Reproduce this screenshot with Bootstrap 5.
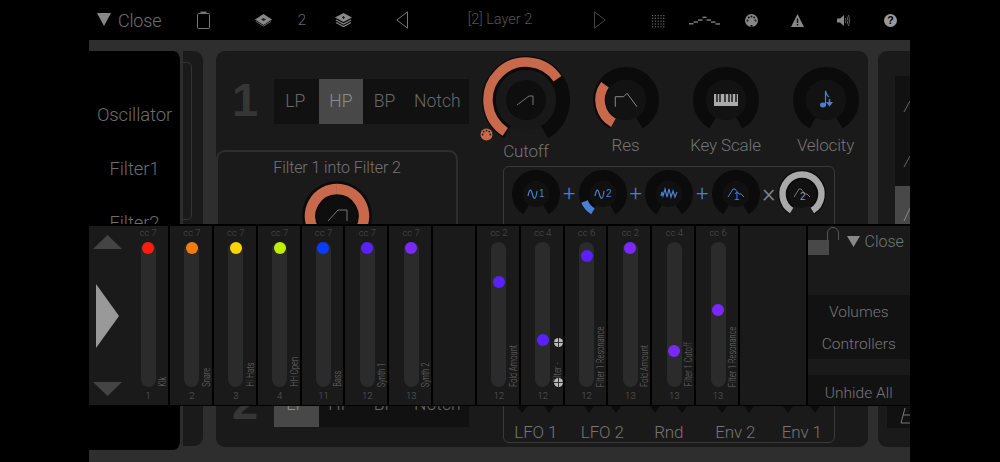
<!doctype html>
<html lang="en">
<head>
    <meta charset="utf-8">
    <meta name="viewport" content="width=device-width, initial-scale=1">
    <title>Layer 2</title>
    <link href="https://cdn.jsdelivr.net/npm/bootstrap@5.3.0/dist/css/bootstrap.min.css" rel="stylesheet">
    <style>
        html, body { height: 462px; overflow: hidden; }
        body { background: #000; color: #707070; font-family: Roboto, "Liberation Sans", sans-serif; font-weight: 300; }
        svg { display: block; overflow: visible; }

        .topbar { height: 40px; display: grid; align-items: center; justify-items: center; padding-left: 97px;
            grid-template-columns: 64px 85px 35px 42px 41px 76px 120px 80px 34px 61px 32px 61px 31px 62px; }
        .tb-close { font-size: 18px; letter-spacing: -.2px; justify-self: start; gap: 7px; }
        .tb-num { font-size: 15px; color: #666; }
        .tb-title { font-size: 14.5px; color: #555; white-space: nowrap; }

        .stage { width: 821px; height: 422px; margin-left: 89px; padding-top: 11px; background: #2e2e2e; overflow: hidden; }
        .side-menu { flex: 0 0 94px; height: 399px; background: #000; border-right: 3px solid #2e2e2e; border-top-right-radius: 9px; border-bottom-right-radius: 9px; padding-top: 37px; }
        .side-menu div { height: 54px; line-height: 54px; text-align: center; font-size: 18.5px; letter-spacing: -.1px; color: #6e6e6e; }
        .gutter { flex: 0 0 20px; height: 395px; background: #1a1a1a; border-top-right-radius: 9px; border-bottom-right-radius: 9px; padding-top: 11px; }
        .gutter-box { width: 9px; height: 158px; border: 1px solid #333; border-left: 0; border-radius: 0 5px 5px 0; }
        .main-panel { flex: 0 0 652px; min-width: 0; height: 396px; margin-left: 13px; background: #1a1a1a; border-radius: 9px; }
        .left-col { flex: 0 0 260px; padding-top: 28px; }
        .right-col { flex: 0 0 392px; min-width: 0; }

        .filter-head { height: 45px; }
        .filter-num { flex: 0 0 58px; text-align: center; font-family: "Liberation Sans", sans-serif; font-weight: 700; font-size: 47px; line-height: 41px; color: #363636; }
        .seg-row { width: 195px; height: 45px; background: #111; font-size: 17.5px; color: #6a6a6a; }
        .seg-cell { flex: 0 0 44.6px; line-height: 45px; text-align: center; margin-left: -1px; margin-right: 1px; }
        .seg-cell.wide { flex: 0 0 61px; }
        .seg-cell.on { background: #484848; color: #8d8d8d; margin-left: 0; margin-right: 0; }

        .into-box { width: 242px; height: 225px; margin-top: 26px; margin-bottom: 7px; border: 2px solid #2e2e2e; border-radius: 9px; padding-top: 5px; }
        .into-title { font-size: 16px; letter-spacing: -.1px; line-height: 22px; color: #757575; }
        .into-knob { margin-top: 2px; }

        .knob-row { padding-top: 5px; height: 115px; }
        .knob-cell { flex: 0 0 100px; }
        .knob-cell.rest { padding-top: 11px; }
        .knob-label { font-size: 17px; letter-spacing: -.15px; line-height: 24px; color: #757575; white-space: nowrap; }
        .knob-cell.first .knob-label { margin-top: -5px; }
        .knob-cell.rest .knob-label { margin-left: -1px; }
        .midi-badge { left: 4px; top: 72px; }

        .mod-box { width: 332px; height: 277px; margin-left: 27px; border: 1px solid #3a3a3a; border-radius: 6px; }
        .mod-knobs { padding: 3px 0 0 8px; }
        .mod-op { flex: 0 0 18.5px; text-align: center; font-size: 22px; line-height: 48px; color: #4a80d0; }
        .mod-op.times { font-size: 25px; color: #8a8a8a; }
        .mod-inputs { margin: 0 0 -2px -1.5px; }
        .mod-input { flex: 0 0 66.5px; text-align: center; font-size: 17px; letter-spacing: -.15px; line-height: 24px; color: #757575; }
        .notch-pair { height: 8px; gap: 17px; margin-bottom: 6px; }
        .notch { width: 0; height: 0; border-left: 5px solid transparent; border-right: 5px solid transparent; border-top: 7px solid #0c0c0c; }

        .right-panel { flex: 0 0 32px; height: 396px; margin-left: 10px; background: #1a1a1a; border-radius: 9px 0 0 9px; padding: 25px 0 0 17px; }
        .right-strip { height: 110px; background: #111; }
        .right-on { height: 45px; background: #484848; }
        .right-low { position: absolute; left: 9px; right: 0; bottom: 19px; height: 23px; background: #111; }

        .mixer { left: 89px; top: 224px; width: 821px; height: 182px; padding: 2px 0 1px; background: #000; gap: 2px; }
        .mix-arrows { flex: 0 0 37.2px; padding: 9px 0 9px 4px; background: #1a1a1a; }
        .arrow-big { margin-left: 3px; }
        .strip { flex: 0 0 41.85px; height: 179px; padding-left: 2px; background: #1a1a1a; }
        .strip.empty.big { flex: 0 0 65.5px; }
        .strip-row { gap: 2px; }
        .cc-label { height: 16px; line-height: 13px; font-size: 9.5px; color: #505050; }
        .track { width: 15px; height: 145px; background: #2b2b2b; border-radius: 8px; }
        .dot { left: 1.5px; width: 12px; height: 12px; border-radius: 50%; }
        .num-label { line-height: 18px; font-size: 9.5px; color: #5a5a5a; }
        .v-label { right: 0; bottom: 18px; writing-mode: vertical-rl; transform: translateY(50%) scaleY(.68) translateY(-50%) rotate(180deg); font-size: 11px; line-height: 10px; color: #6a6a6a; white-space: nowrap; }
        .fx-ball { right: 0; width: 9px; height: 9px; }

        .mix-side { flex: 0 0 102.5px; height: 179px; background: #1a1a1a; font-size: 15.5px; color: #767676; }
        .mix-head { height: 69px; }
        .mix-close { gap: 5px; margin-left: 8px; margin-top: 8px; height: 15px; line-height: 15px; font-size: 16px; }
        .mix-list { height: 64px; background: #121212; }
        .mix-list div { height: 32px; line-height: 35px; }
        .mix-gap { height: 16px; }
        .mix-unhide { height: 30px; line-height: 36px; background: #121212; }
    </style>
</head>

<body>

<header class="topbar">
    <div class="tb-close d-flex align-items-center">
        <svg width="14" height="14" viewBox="0 0 14 14"><path d="M0 0H14L7 13Z" fill="#888"/></svg>
        <span>Close</span>
    </div>
    <svg width="13" height="18" viewBox="0 0 13 18"><rect x=".5" y="2.5" width="12" height="15" rx="1" fill="none" stroke="#777"/><rect x="3.5" y=".5" width="6" height="2.5" fill="#777"/></svg>
    <svg width="17" height="12" viewBox="0 0 17 12"><path d="M8.5 0L17 5.5 8.5 11 0 5.5Z" fill="#888"/><path d="M8.5 4L11 5.5 8.5 7 6 5.5Z" fill="#222"/><path d="M1 7.5L8.5 12 16 7.5" fill="none" stroke="#666"/></svg>
    <span class="tb-num">2</span>
    <svg width="17" height="14" viewBox="0 0 17 14"><path d="M8.5 0L17 4.5 8.5 9 0 4.5Z" fill="#888"/><path d="M1 7L8.5 11 16 7M1 9.5L8.5 13.5 16 9.5" fill="none" stroke="#888" stroke-width="1.2"/><path d="M7 4.5H10M8.5 3V6" stroke="#222"/></svg>
    <svg width="12" height="18" viewBox="0 0 12 18"><path d="M11.5 .8V17.2L.8 9Z" fill="none" stroke="#777"/></svg>
    <span class="tb-title">[2] Layer 2</span>
    <svg width="12" height="18" viewBox="0 0 12 18"><path d="M.5 .8V17.2L11.2 9Z" fill="none" stroke="#444"/></svg>
    <svg id="dotGrid" width="13" height="13" viewBox="0 0 13 13"></svg>
    <svg width="31" height="9" viewBox="0 0 31 9" fill="#777"><rect x="0" y="7" width="4.5" height="1.5"/><rect x="4.5" y="5.3" width="4.5" height="1.5"/><rect x="9" y="3.3" width="4.5" height="1.5"/><rect x="13.5" y=".6" width="4" height="1.5"/><rect x="17.5" y="3.3" width="4.5" height="1.5"/><rect x="22" y="5.3" width="4.5" height="1.5"/><rect x="26.5" y="7.2" width="4.5" height="1.5"/></svg>
    <svg width="13" height="13" viewBox="0 0 13 13"><circle cx="6.5" cy="6.5" r="6.5" fill="#888"/><g fill="#111"><circle cx="2.5" cy="6.5" r="1"/><circle cx="3.8" cy="3.6" r="1"/><circle cx="6.5" cy="2.5" r="1"/><circle cx="9.2" cy="3.6" r="1"/><circle cx="10.5" cy="6.5" r="1"/><rect x="5.5" y="11" width="2" height="2"/></g></svg>
    <svg width="13" height="13" viewBox="0 0 13 13"><path d="M6.5 0L13 13H0Z" fill="#888"/><path d="M6.5 4.5V9M6.5 10V11.5" stroke="#111" stroke-width="1.4"/></svg>
    <svg width="13" height="13" viewBox="0 0 13 13"><path d="M0 4.5H3L7 1V12L3 8.5H0Z" fill="#888"/><path d="M8.3 4Q9.6 6.5 8.3 9M10 2.5Q12 6.5 10 10.5M11.5 1Q14 6.5 11.5 12" fill="none" stroke="#777" stroke-width=".8"/></svg>
    <svg width="13" height="13" viewBox="0 0 13 13"><circle cx="6.5" cy="6.5" r="6.5" fill="#999"/><text x="6.5" y="10.2" text-anchor="middle" font-family="Liberation Sans" font-weight="700" font-size="10.5" fill="#000">?</text></svg>
</header>

<main class="stage d-flex align-items-start position-relative">
    <nav class="side-menu">
        <div>Oscillator</div>
        <div>Filter1</div>
        <div>Filter2</div>
    </nav>
    <div class="gutter"><div class="gutter-box"></div></div>

    <section class="main-panel d-flex">
        <div class="left-col">
            <div class="filter-head d-flex">
                <div class="filter-num">1</div>
                <div class="seg-row d-flex">
                    <div class="seg-cell">LP</div>
                    <div class="seg-cell on">HP</div>
                    <div class="seg-cell">BP</div>
                    <div class="seg-cell wide">Notch</div>
                </div>
            </div>
            <div class="into-box text-center">
                <div class="into-title">Filter 1 into Filter 2</div>
                <div class="into-knob d-flex justify-content-center" data-knob="into"></div>
            </div>
            <div class="filter-head d-flex">
                <div class="filter-num">2</div>
                <div class="seg-row d-flex">
                    <div class="seg-cell on">LP</div>
                    <div class="seg-cell">HP</div>
                    <div class="seg-cell">BP</div>
                    <div class="seg-cell wide">Notch</div>
                </div>
            </div>
        </div>

        <div class="right-col">
            <div class="knob-row d-flex">
                <div class="knob-cell first text-center position-relative">
                    <div class="d-flex justify-content-center" data-knob="cutoff"></div>
                    <svg class="midi-badge position-absolute" width="13" height="13" viewBox="0 0 13 13"><circle cx="6.5" cy="6.5" r="6" fill="#c8694c"/><g fill="#1a1a1a"><circle cx="2.6" cy="6.5" r=".9"/><circle cx="3.8" cy="3.6" r=".9"/><circle cx="6.5" cy="2.6" r=".9"/><circle cx="9.2" cy="3.6" r=".9"/><circle cx="10.4" cy="6.5" r=".9"/></g></svg>
                    <div class="knob-label">Cutoff</div>
                </div>
                <div class="knob-cell rest text-center">
                    <div class="d-flex justify-content-center" data-knob="res"></div>
                    <div class="knob-label">Res</div>
                </div>
                <div class="knob-cell rest text-center">
                    <div class="d-flex justify-content-center" data-knob="keys"></div>
                    <div class="knob-label">Key Scale</div>
                </div>
                <div class="knob-cell rest text-center">
                    <div class="d-flex justify-content-center" data-knob="velocity"></div>
                    <div class="knob-label">Velocity</div>
                </div>
            </div>

            <div class="mod-box d-flex flex-column justify-content-between">
                <div class="mod-knobs d-flex">
                    <div data-knob="mod1"></div>
                    <div class="mod-op">+</div>
                    <div data-knob="mod2"></div>
                    <div class="mod-op">+</div>
                    <div data-knob="mod3"></div>
                    <div class="mod-op">+</div>
                    <div data-knob="mod4"></div>
                    <div class="mod-op times">×</div>
                    <div data-knob="mod5"></div>
                </div>
                <div class="mod-inputs d-flex">
                    <div class="mod-input"><div class="notch-pair d-flex justify-content-center"><i class="notch"></i><i class="notch"></i></div>LFO 1</div>
                    <div class="mod-input"><div class="notch-pair d-flex justify-content-center"><i class="notch"></i><i class="notch"></i></div>LFO 2</div>
                    <div class="mod-input"><div class="notch-pair d-flex justify-content-center"><i class="notch"></i><i class="notch"></i></div>Rnd</div>
                    <div class="mod-input"><div class="notch-pair d-flex justify-content-center"><i class="notch"></i><i class="notch"></i></div>Env 2</div>
                    <div class="mod-input"><div class="notch-pair d-flex justify-content-center"><i class="notch"></i><i class="notch"></i></div>Env 1</div>
                </div>
            </div>
        </div>
    </section>

    <aside class="right-panel position-relative">
        <div class="right-strip"><svg width="15" height="110" viewBox="0 0 15 110"><path d="M9 36L15 25M9 91L15 80" stroke="#666"/></svg></div>
        <div class="right-on"><svg width="15" height="45" viewBox="0 0 15 45"><path d="M9 35L15 22" stroke="#888"/></svg></div>
        <div class="right-low"><svg width="23" height="23" viewBox="0 0 23 23"><path d="M23 10H16M14 18L18 3M14 18H23" fill="none" stroke="#777"/></svg></div>
    </aside>
</main>

<!-- mixer overlay sits on top of the layer page -->
<div id="mixer" class="mixer position-absolute d-flex">
    <div class="d-flex">
        <div class="mix-arrows d-flex flex-column justify-content-between">
            <svg width="29" height="14" viewBox="0 0 29 14"><path d="M14.5 0L29 14H0Z" fill="#444"/></svg>
            <svg class="arrow-big" width="23" height="64" viewBox="0 0 23 64"><path d="M0 0L23 32 0 64Z" fill="#999"/></svg>
            <svg width="29" height="14" viewBox="0 0 29 14"><path d="M0 0H29L14.5 14Z" fill="#444"/></svg>
        </div>
        <div id="firstStrip" class="d-flex"></div>
    </div>
    <div id="strips" class="strip-row d-flex"></div>
    <div class="mix-side text-center">
        <div class="mix-head d-flex">
            <svg width="31" height="29" viewBox="0 0 31 29"><path d="M19.5 14V7A5.5 5.5 0 0 1 30.5 7V14" fill="none" stroke="#555"/><rect x="0" y="14" width="21" height="15" fill="#484848"/></svg>
            <div class="mix-close d-flex align-items-center">
                <svg width="13" height="11" viewBox="0 0 13 11"><path d="M0 0H13L6.5 11Z" fill="#888"/></svg>
                <span>Close</span>
            </div>
        </div>
        <div class="mix-list">
            <div>Volumes</div>
            <div>Controllers</div>
        </div>
        <div class="mix-gap"></div>
        <div class="mix-unhide">Unhide All</div>
    </div>
</div>

<script>
    // mixer strips: cc, name, channel, dot colour, dot offset from track top
    var stripData = [
        ["cc 7", "Klk", 1, "#ff1c0a", 0],
        ["cc 7", "Snare", 2, "#f57c0a", 0],
        ["cc 7", "Hi Hats", 3, "#ffd400", 0],
        ["cc 7", "HH Open", 4, "#bdf000", 0],
        ["cc 7", "Bass", 11, "#0a3cff", 0],
        ["cc 7", "Synth 1", 12, "#5a20ff", 0],
        ["cc 7", "Synth 2", 13, "#7a28ff", 0],
        null,
        ["cc 2", "Fold Amount", 12, "#5a20ff", 34],
        ["cc 4", "- Filter -", 12, "#5a20ff", 92],
        ["cc 6", "Filter 1 Resonance", 12, "#5a20ff", 8],
        ["cc 2", "Fold Amount", 13, "#7a28ff", 0],
        ["cc 4", "Filter 1 Cutoff", 13, "#7a28ff", 103],
        ["cc 6", "Filter 1 Resonance", 13, "#7a28ff", 62],
        "big"
    ];

    function stripHtml(s) {
        if (s === null) return '<div class="strip empty"></div>';
        if (s === "big") return '<div class="strip empty big"></div>';
        var balls = "";
        if (s[1] === "- Filter -") {
            var ball = '<svg class="fx-ball position-absolute" style="top:%px" viewBox="0 0 9 9"><circle cx="4.5" cy="4.5" r="4.5" fill="#bbb"/><path d="M0 4.5H9M4.5 0V9" stroke="#333"/></svg>';
            balls = ball.replace("%", 112) + ball.replace("%", 152);
        }
        return '<div class="strip position-relative d-flex flex-column align-items-center">' +
            '<div class="cc-label">' + s[0] + '</div>' +
            '<div class="track position-relative"><div class="dot position-absolute" style="top:' + s[4] + 'px;background:' + s[3] + '"></div></div>' +
            '<div class="num-label">' + s[2] + '</div>' +
            '<div class="v-label position-absolute">' + s[1] + '</div>' + balls +
            '</div>';
    }

    document.getElementById("firstStrip").innerHTML = stripHtml(stripData[0]);
    document.getElementById("strips").innerHTML = stripData.slice(1).map(stripHtml).join("");

    // polar point, degrees clockwise from the top
    function pt(r, deg) {
        var a = deg * Math.PI / 180;
        return (r * Math.sin(a)).toFixed(2) + " " + (-r * Math.cos(a)).toFixed(2);
    }
    function arc(r, from, to, color, width) {
        var big = (to - from) > 180 ? 1 : 0;
        return '<path d="M' + pt(r, from) + 'A' + r + ' ' + r + ' 0 ' + big + ' 1 ' + pt(r, to) + '" fill="none" stroke="' + color + '" stroke-width="' + width + '"/>';
    }

    var HP = "M-9 5L3 -4H7V5";
    var orange = "#c8694c", blue = "#4a80d0";
    var digit = function (d, x, y, c) { return '<text x="' + x + '" y="' + y + '" font-family="Liberation Sans" font-size="10" fill="' + c + '">' + d + '</text>'; };

    var keyIcon = '<rect x="-12" y="-6" width="24" height="12" fill="#aaa"/><path d="M-9 -6V2M-6 -6V2M-1 -6V2M3 -6V2M6 -6V2M10 -6V2" stroke="#111" stroke-width="1.4"/>';
    var noteIcon = '<ellipse cx="-3" cy="5" rx="3" ry="2.4" fill="' + blue + '"/><path d="M-.5 5V-9Q1 -4 3 -3" fill="none" stroke="' + blue + '" stroke-width="1.2"/><path d="M3.5 -1V3" stroke="' + blue + '" stroke-width="1.5"/><path d="M0 2H7L3.5 6.5Z" fill="' + blue + '"/>';
    var sineIcon = '<path d="M-8 2Q-6 -8 -4 -1T-1 4Q0 4 1 -3" fill="none" stroke="' + blue + '" stroke-width="1.2"/>';
    var envIcon = function (c) { return '<path d="M-8 3L-3 -5H-1L3 0H5L8 3" fill="none" stroke="' + c + '" stroke-width="1"/>'; };

    var knobs = {
        cutoff: { r: 44, trackIn: 30, band: "#181818", hub: 20, hubC: "#0e0e0e", gap: 30, val: [213, 416], valR: 38, valW: 9.5, valC: orange, icon: '<path d="' + HP + '" fill="none" stroke="#777"/>' },
        res: { r: 33, trackIn: 20, hub: 20, hubC: "#121212", gap: 30, val: [209, 306], valR: 26, valW: 9.5, valC: orange, icon: '<path d="M-10.7 6.7V-3.3H-2.3L1 -6.7L11 6.7" fill="none" stroke="#888"/>' },
        keys: { r: 33, trackIn: 20, hub: 20, hubC: "#121212", gap: 30, icon: keyIcon },
        velocity: { r: 33, trackIn: 20, hub: 20, hubC: "#121212", gap: 30, icon: noteIcon },
        into: { r: 35, trackIn: 20, hub: 20, hubC: "#0e0e0e", gap: 0, val: [0, 359.9], valR: 27, valW: 10.5, valC: orange, icon: '<path d="M-9 5L1 -6H10V5" fill="none" stroke="#777"/>' },
        mod1: { r: 24, trackIn: 13, hub: 13, hubC: "#101010", gap: 32, icon: sineIcon + digit(1, 3, 3, blue) },
        mod2: { r: 24, trackIn: 13, hub: 13, hubC: "#101010", gap: 32, val: [210, 248], valR: 20, valW: 7, valC: blue, icon: sineIcon + digit(2, 3, 3, blue) },
        mod3: { r: 24, trackIn: 13, hub: 13, hubC: "#101010", gap: 32, icon: '<path d="M-8 2L-7 -2L-6 2L-4 -5L-2 3L0 -5L2 3L4 -3L6 3L8 -2" fill="none" stroke="' + blue + '" stroke-width="1.2"/>' },
        mod4: { r: 24, trackIn: 13, hub: 13, hubC: "#101010", gap: 32, icon: envIcon(blue) + digit(1, -2, 6, blue) },
        mod5: { r: 24, trackIn: 14, hub: 14, hubC: "#111", gap: 32, val: [212, 508], valR: 19.5, valW: 6.5, valC: "#a9a9a9", icon: envIcon("#777") + digit(2, -2, 6, "#999") }
    };

    document.querySelectorAll("[data-knob]").forEach(function (el) {
        var k = knobs[el.getAttribute("data-knob")];
        var d = k.r * 2;
        var mid = (k.r + k.trackIn) / 2, w = k.r - k.trackIn;
        var svg = '<svg width="' + d + '" height="' + d + '" viewBox="' + (-k.r) + ' ' + (-k.r) + ' ' + d + ' ' + d + '">';
        if (k.gap) {
            svg += arc(mid, 180 + k.gap, 540 - k.gap, "#0b0b0b", w);
        } else {
            svg += '<circle r="' + k.r + '" fill="#0b0b0b"/>';
        }
        if (k.band) svg += '<circle r="' + k.trackIn + '" fill="' + k.band + '"/>';
        if (k.val) {
            svg += arc(k.valR, k.val[0], k.val[1], k.valC, k.valW);
        }
        svg += '<circle r="' + k.hub + '" fill="' + k.hubC + '"/>' + k.icon + '</svg>';
        el.innerHTML = svg;
    });

    var dots = "";
    for (var y = 1; y < 13; y += 2.8) {
        for (var x = 1; x < 13; x += 2.8) {
            dots += '<rect x="' + x + '" y="' + y + '" width="1.2" height="1.2" fill="#666"/>';
        }
    }
    document.getElementById("dotGrid").innerHTML = dots;
</script>
<script src="https://cdn.jsdelivr.net/npm/bootstrap@5.3.0/dist/js/bootstrap.bundle.min.js"></script>
</body>
</html>
